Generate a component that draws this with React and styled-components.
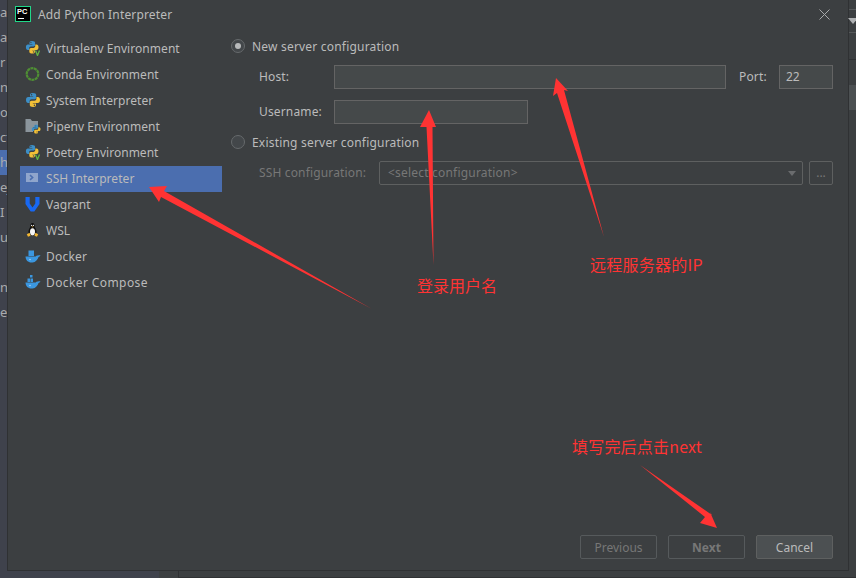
import React from "react";
import styled, { createGlobalStyle } from "styled-components";

const GlobalStyle = createGlobalStyle`
  html, body {
    margin: 0;
    padding: 0;
    background: #3c3f41;
  }
  * {
    box-sizing: border-box;
  }
`;

const Page = styled.div`
  position: relative;
  display: grid;
  grid-template-columns: 7px 842px 7px;
  grid-template-rows: 571px 7px;
  width: 856px;
  height: 578px;
  overflow: hidden;
  background: #3c3f41;
  color: #bbbbbb;
  font-family: "Noto Sans", "Open Sans", sans-serif;
  font-size: 12px;
`;

/* the IDE window peeking out behind the dialog */
const IdeLeft = styled.div`
  display: flex;
  flex-direction: column;
  overflow: hidden;
  background: #3f424c;
`;

const IdeLeftRow = styled.div`
  flex: 0 0 25px;
  line-height: 25px;
  white-space: nowrap;
  color: #a9abae;
  font-size: 13px;
  background: ${(p) => (p.$active ? "#4b6eaf" : "transparent")};
`;

const IdeRight = styled.div`
  display: flex;
  flex-direction: column;
  background: #3c3f41;
`;

const IdeRightCell = styled.div`
  display: flex;
  align-items: center;
  justify-content: center;
  flex: ${(p) => (p.$h ? `0 0 ${p.$h}px` : "1")};
  border-bottom: ${(p) => (p.$line ? `1px solid ${p.$line}` : "none")};
  background: ${(p) => p.$bg || "transparent"};
`;

const Triangle = styled.div`
  width: 0;
  height: 0;
  border-left: 5px solid transparent;
  border-right: 5px solid transparent;
  border-top: 6px solid #afb1b3;
`;

const IdeBottom = styled.div`
  grid-column: 1 / 4;
  display: flex;
`;

const IdeBottomLeft = styled.div`
  flex: 0 0 159px;
  background: #3f424c;
`;

const IdeBottomGap = styled.div`
  flex: 0 0 20px;
  background: #3c3f41;
  border-right: 1px solid #2f3133;
`;

const IdeBottomRight = styled.div`
  flex: 1;
  background: #3c3f41;
  border-bottom: 1px solid #2f3133;
`;

const Dialog = styled.div`
  display: flex;
  flex-direction: column;
  background: #3c3f41;
  border: 1px solid #2f3133;
  border-top: none;
`;

const TitleBar = styled.div`
  display: flex;
  align-items: center;
  flex: 0 0 28px;
  padding: 0 18px 0 7px;
`;

const Logo = styled.div`
  position: relative;
  width: 16px;
  height: 16px;
  margin-right: 7px;
  background: #000;
  border: 1px solid #21d789;
  color: #fff;
  font-family: "Liberation Sans", sans-serif;
  font-weight: 700;
  font-size: 7.5px;
  line-height: 10px;
  padding-left: 1px;
  &::after {
    content: "";
    position: absolute;
    left: 2px;
    bottom: 2px;
    width: 6px;
    height: 1px;
    background: #fff;
  }
`;

const Title = styled.div`
  flex: 1;
  font-size: 12px;
  letter-spacing: 0.15px;
`;

const Body = styled.div`
  flex: 1;
  display: flex;
  padding-top: 8px;
`;

const Sidebar = styled.div`
  flex: 0 0 202px;
  margin-left: 12px;
`;

const SideItem = styled.div`
  display: flex;
  align-items: center;
  gap: 5px;
  height: 26px;
  padding: 0 0 2px 5px;
  background: ${(p) => (p.$selected ? "#4b6eaf" : "transparent")};
  color: #bbbbbb;
  letter-spacing: ${(p) => p.$spacing || 0.05}px;
`;

const Form = styled.div`
  flex: 1;
  display: flex;
  flex-direction: column;
  margin-left: 9px;
  padding-right: 15px;
`;

const RadioRow = styled.div`
  display: flex;
  align-items: center;
  gap: 7px;
  height: 20px;
  margin-top: ${(p) => p.$top || 0}px;
  letter-spacing: 0.2px;
`;

const Radio = styled.div`
  display: flex;
  align-items: center;
  justify-content: center;
  width: 14px;
  height: 14px;
  border-radius: 50%;
  border: 1px solid #666a6c;
  background: #43474a;
  &::after {
    content: "";
    display: ${(p) => (p.$checked ? "block" : "none")};
    width: 6px;
    height: 6px;
    border-radius: 50%;
    background: #b8babb;
  }
`;

const FieldRow = styled.div`
  display: flex;
  align-items: center;
  height: 24px;
  padding-left: 28px;
  margin-top: ${(p) => p.$top || 0}px;
  color: ${(p) => (p.$disabled ? "#777777" : "#bbbbbb")};
`;

const FieldLabel = styled.div`
  flex: 0 0 ${(p) => p.$w}px;
  margin-left: ${(p) => p.$left || 0}px;
  padding-bottom: 2px;
  letter-spacing: 0.15px;
`;

const Input = styled.div`
  flex: ${(p) => (p.$w ? `0 0 ${p.$w}px` : "1")};
  height: 24px;
  line-height: 22px;
  padding-left: 6px;
  background: #45494a;
  border: 1px solid #646464;
`;

const Select = styled.div`
  position: relative;
  flex: 1;
  height: 24px;
  line-height: 22px;
  padding-left: 8px;
  border: 1px solid #5e6060;
  border-radius: 2px;
  color: #777777;
  letter-spacing: 0.2px;
  &::after {
    content: "";
    position: absolute;
    right: 6px;
    top: 9px;
    border-left: 4px solid transparent;
    border-right: 4px solid transparent;
    border-top: 5px solid #6a6c6e;
  }
`;

const DotsButton = styled.div`
  flex: 0 0 24px;
  height: 24px;
  margin-left: 6px;
  line-height: 22px;
  text-align: center;
  border: 1px solid #5e6060;
  border-radius: 2px;
  color: #777777;
`;

const Footer = styled.div`
  display: flex;
  justify-content: flex-end;
  gap: 11px;
  padding: 0 15px 11px 0;
`;

const Button = styled.div`
  width: 77px;
  height: 24px;
  line-height: 23px;
  text-align: center;
  border-radius: 2px;
  border: 1px solid ${(p) => (p.$active ? "#5e6060" : "#565a5c")};
  background: ${(p) => (p.$active ? "#4c5052" : "transparent")};
  color: ${(p) => (p.$active ? "#bbbbbb" : "#777777")};
  font-weight: ${(p) => (p.$bold ? 700 : 400)};
`;

/* the red notes someone painted on the screenshot */
const Arrows = styled.svg`
  position: absolute;
  left: 0;
  top: 0;
  pointer-events: none;
`;

const Note = styled.div`
  position: absolute;
  left: ${(p) => p.$x}px;
  top: ${(p) => p.$y}px;
  color: #ff3333;
  font-family: "Noto Sans CJK SC", "Liberation Sans", sans-serif;
  font-size: 16px;
  line-height: 22px;
  letter-spacing: ${(p) => p.$spacing || 0}px;
  white-space: nowrap;
`;

const Svg = ({ children }) => (
  <svg width="16" height="16" viewBox="0 0 16 16" style={{ flex: "none" }}>
    {children}
  </svg>
);

const Snake = ({ scale = 1, dx = 0, dy = 0 }) => (
  <g transform={`translate(${dx} ${dy}) scale(${scale})`}>
    <path
      d="M7.8 1C5.6 1 5 1.9 5 3v1.5h3.2V5H3.2C1.8 5 1 6.2 1 8s.8 3 2.2 3h1.4V9.2c0-1.1.9-2 2-2h2.8c1 0 1.8-.8 1.8-1.8V3c0-1.1-1-2-3.4-2z"
      fill="#3d8fc6"
    />
    <path
      d="M8.2 15c2.2 0 2.8-.9 2.8-2v-1.5H7.8V11h5c1.4 0 2.2-1.2 2.2-3s-.8-3-2.2-3h-1.4v1.8c0 1.1-.9 2-2 2H6.6c-1 0-1.8.8-1.8 1.8V13c0 1.1 1 2 3.4 2z"
      fill="#f2c037"
    />
    <circle cx="6.6" cy="2.8" r=".7" fill="#3c3f41" />
    <circle cx="9.4" cy="13.2" r=".7" fill="#3c3f41" />
  </g>
);

const PythonIcon = () => (
  <Svg>
    <Snake />
  </Svg>
);

const PythonVIcon = () => (
  <Svg>
    <Snake scale={0.9} />
    <path d="M10.5 10.5l2 5 2-5" fill="none" stroke="#62b543" strokeWidth="1.3" />
  </Svg>
);

const CondaIcon = () => (
  <Svg>
    <circle cx="7.5" cy="8" r="5.8" fill="none" stroke="#4f8f34" strokeWidth="2.2" strokeDasharray="3 .5" />
  </Svg>
);

const PipenvIcon = () => (
  <Svg>
    <path d="M0.5 1h5l1.5 2h6v6H8v5H.5z" fill="#8b959c" />
    <Snake scale={0.62} dx={6.2} dy={6.2} />
  </Svg>
);

const SshIcon = () => (
  <Svg>
    <rect x="1" y="3" width="12" height="9" fill="#8fa5cc" />
    <path d="M5 5.2l2.6 2.3L5 9.8" fill="none" stroke="#4b6eaf" strokeWidth="1.6" />
  </Svg>
);

const VagrantIcon = () => (
  <Svg>
    <path d="M.5 1h4.200v6.500L7.500 11.500l2.800-4V1h4.200v7L9.300 15.500H5.700L.5 8z" fill="#1868f2" />
  </Svg>
);

const TuxIcon = () => (
  <Svg>
    <path d="M7.5 1C5.8 1 5.4 2.4 5.4 4c0 1.4-1.9 3.2-2 5.800C3.300 12 4.800 14 7.500 14s4.200-2 4.100-4.200c-.1-2.600-2-4.400-2-5.800 0-1.600-.4-3-2.100-3z" fill="#111" />
    <ellipse cx="7.5" cy="9.8" rx="2.5" ry="3.6" fill="#f4f4f4" />
    <circle cx="6.6" cy="3.4" r=".6" fill="#eee" />
    <circle cx="8.4" cy="3.4" r=".6" fill="#eee" />
    <path d="M6.5 4.600h2L7.500 5.600z" fill="#f2b632" />
    <path d="M1.800 12.200l2.800-1.400 1 3-2.600.9zM13.200 12.200l-2.800-1.400-1 3 2.600.9z" fill="#f2b632" />
  </Svg>
);

const Whale = () => (
  <path
    d="M.5 8.500h10.200c.6-.9 1.600-1.200 2.400-.9.500-.5 1.200-.6 2.400-.3-.4.9-1 1.400-2 1.600C12 13 9.500 14.500 6.500 14.500 3 14.500.7 12.300.5 8.500z"
    fill="#3b97e0"
  />
);

const DockerIcon = () => (
  <Svg>
    <Whale />
    <rect x="3.5" y="2.500" width="5.500" height="5.500" fill="#3b97e0" />
    <circle cx="5" cy="11.500" r=".7" fill="#bcdcf5" />
  </Svg>
);

const ComposeIcon = () => (
  <Svg>
    <Whale />
    <rect x="5" y="1" width="2.500" height="2.500" fill="#3b97e0" />
    <rect x="2.500" y="4.500" width="2.500" height="3.500" fill="#3b97e0" />
    <rect x="5.500" y="4.500" width="2.500" height="3.500" fill="#3b97e0" />
    <circle cx="5" cy="11.500" r=".7" fill="#bcdcf5" />
  </Svg>
);

const CloseIcon = () => (
  <svg width="11" height="11" viewBox="0 0 11 11">
    <path d="M.5.5l10 10M10.500.5l-10 10" stroke="#a7a9ab" strokeWidth="1" fill="none" />
  </svg>
);

const ideLeftRows = ["ar", "a", "r", "ns", "or", "ct", "h", "eje", "I", "ua", "", "nc", "e"];

const sideItems = [
  { label: "Virtualenv Environment", Icon: PythonVIcon },
  { label: "Conda Environment", Icon: CondaIcon },
  { label: "System Interpreter", Icon: PythonIcon },
  { label: "Pipenv Environment", Icon: PipenvIcon, spacing: 0.01 },
  { label: "Poetry Environment", Icon: PythonVIcon, spacing: 0.01 },
  { label: "SSH Interpreter", Icon: SshIcon, selected: true },
  { label: "Vagrant", Icon: VagrantIcon },
  { label: "WSL", Icon: TuxIcon },
  { label: "Docker", Icon: DockerIcon, spacing: 0.2 },
  { label: "Docker Compose", Icon: ComposeIcon, spacing: 0.4 },
];

const App = () => {
  return (
    <>
      <GlobalStyle />
      <Page>
        <IdeLeft>
          {ideLeftRows.map((text, i) => (
            <IdeLeftRow key={i} $active={i === 6}>
              {text}
            </IdeLeftRow>
          ))}
        </IdeLeft>

        <Dialog>
          <TitleBar>
            <Logo>PC</Logo>
            <Title>Add Python Interpreter</Title>
            <CloseIcon />
          </TitleBar>

          <Body>
            <Sidebar>
              {sideItems.map(({ label, Icon, selected, spacing }) => (
                <SideItem key={label} $selected={selected} $spacing={spacing}>
                  <Icon />
                  {label}
                </SideItem>
              ))}
            </Sidebar>

            <Form>
              <RadioRow>
                <Radio $checked />
                New server configuration
              </RadioRow>
              <FieldRow $top={9}>
                <FieldLabel $w={75}>Host:</FieldLabel>
                <Input />
                <FieldLabel $w={40} $left={13}>
                  Port:
                </FieldLabel>
                <Input $w={54}>22</Input>
              </FieldRow>
              <FieldRow $top={11}>
                <FieldLabel $w={75}>Username:</FieldLabel>
                <Input $w={194} />
              </FieldRow>
              <RadioRow $top={8}>
                <Radio />
                Existing server configuration
              </RadioRow>
              <FieldRow $top={9} $disabled>
                <FieldLabel $w={120}>SSH configuration:</FieldLabel>
                <Select>&lt;select configuration&gt;</Select>
                <DotsButton>...</DotsButton>
              </FieldRow>
            </Form>
          </Body>

          <Footer>
            <Button>Previous</Button>
            <Button $bold>Next</Button>
            <Button $active>Cancel</Button>
          </Footer>
        </Dialog>

        <IdeRight>
          <IdeRightCell $h={10} $line="#55585a" />
          <IdeRightCell $h={23} $line="#55585a">
            <Triangle />
          </IdeRightCell>
          <IdeRightCell $h={27} $line="#2f3133" />
          <IdeRightCell $h={25} />
          <IdeRightCell $h={25} $bg="#4c5052" />
          <IdeRightCell />
        </IdeRight>

        <IdeBottom>
          <IdeBottomLeft />
          <IdeBottomGap />
          <IdeBottomRight />
        </IdeBottom>

        <Arrows width="856" height="578" viewBox="0 0 856 578">
          <g fill="#ff3333">
            <polygon points="149,187 167,186 164,191 372,309 161,197 159,202" />
            <polygon points="429,110 436,127 432.500,127 433.500,265 426.500,127 420,127" />
            <polygon points="556,78 568,91 564,90 604,237 557,93 553,96" />
            <polygon points="717,528 700,523 705,517 640,465 712,515 710,512" />
          </g>
        </Arrows>
        <Note $x={417} $y={274}>登录用户名</Note>
        <Note $x={590} $y={253} $spacing={0.25}>远程服务器的IP</Note>
        <Note $x={572} $y={435} $spacing={0.2}>填写完后点击next</Note>
      </Page>
    </>
  );
};

export default App;
